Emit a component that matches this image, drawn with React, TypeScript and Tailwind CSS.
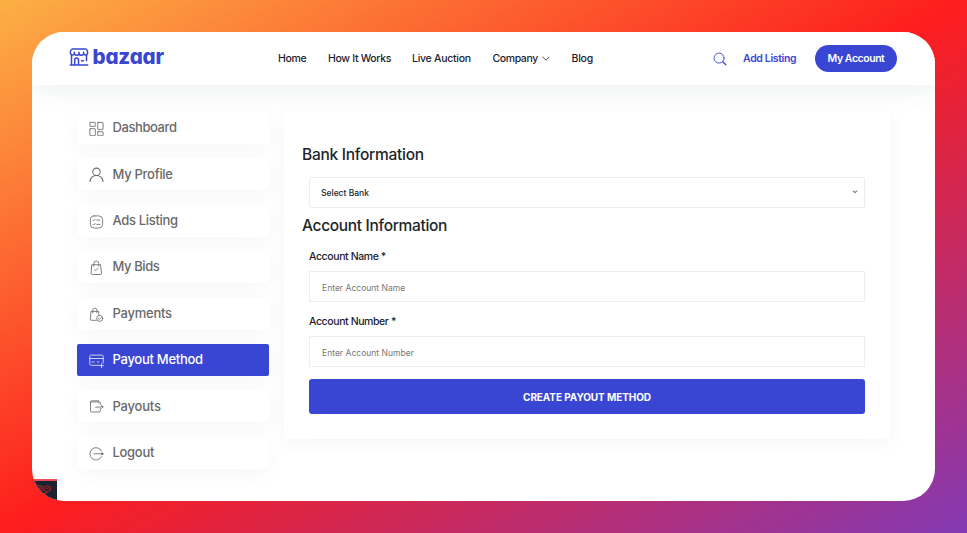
import React from "react";

const thin = {
  viewBox: "0 0 16 16",
  fill: "none",
  stroke: "currentColor",
  strokeWidth: 0.85,
  strokeLinecap: "round" as const,
  strokeLinejoin: "round" as const,
};

const DashboardIcon = () => (
  <svg {...thin} className="h-4 w-4">
    <rect x="0.9" y="2.4" width="5.4" height="4" rx="0.4" />
    <rect x="8.700" y="2.4" width="5.400" height="7" rx="0.4" />
    <rect x="0.9" y="8.700" width="5.400" height="7" rx="0.4" />
    <rect x="8.700" y="11.700" width="5.400" height="4" rx="0.4" />
  </svg>
);

const ProfileIcon = () => (
  <svg {...thin} strokeWidth={1.05} className="h-4 w-4">
    <circle cx="7.500" cy="5.800" r="3.700" />
    <path d="M.9 15.600c.5-3.400 3-6.100 6.600-6.100s6.100 2.700 6.600 6.100" />
  </svg>
);

const ListingIcon = () => (
  <svg {...thin} className="h-4 w-4">
    <rect x="1.400" y="2.900" width="12.200" height="12.200" rx="3.800" />
    <path d="M7.900 7.100h3M7.900 11.400h3M4 7.100l.7.700 1.500-1.600M4 11.400l.7.700 1.500-1.600" />
  </svg>
);

const BidsIcon = () => (
  <svg {...thin} className="h-4 w-4">
    <path d="M3.100 5.700h8.400l1 8.400c.1.900-.4 1.400-1.200 1.400h-8c-.8 0-1.300-.5-1.200-1.400z" />
    <path d="M4.800 7.200V4.500a2.500 2.500 0 0 1 5 0v2.700M5.600 10.500l1.200 1.100 2.300-2.300" />
  </svg>
);

const PaymentsIcon = () => (
  <svg {...thin} className="h-4 w-4">
    <path d="M7.300 14.300H2.300c-.7 0-1.100-.4-1-1.100l.7-7.800h7.600l.4 3.600" />
    <path d="M3.700 6.800V4.300a2.100 2.100 0 0 1 4.200 0v2.500" />
    <circle cx="10.700" cy="12.400" r="3" />
    <path d="M9.400 12.500l.9.900 1.800-1.900" />
  </svg>
);

const MethodIcon = () => (
  <svg {...thin} strokeWidth={0.75} className="h-4 w-4">
    <path d="M10 13.300H2.300c-.9 0-1.500-.5-1.500-1.400V4.500c0-.9.600-1.400 1.500-1.400h10.400c.9 0 1.500.5 1.500 1.400V11" />
    <path d="M.8 6.500h13.400M3 10h2M8.300 10h1.500M12.500 11.600v4M10.500 13.600h4" />
  </svg>
);

const PayoutsIcon = () => (
  <svg {...thin} className="h-4 w-4">
    <path d="M11.300 6.600V4.900c0-.6-.4-.9-1-.9H2.500a.6.600 0 0 1 0-1.200h7.300V4" />
    <path d="M1.500 3.500v9.400c0 .7.400 1.100 1.100 1.100h7.700c.6 0 1-.4 1-1v-2.300M6.700 9.200l7.300-.4M12.400 7.400l1.700 1.400-1.500 1.500" />
  </svg>
);

const LogoutIcon = () => (
  <svg {...thin} className="h-4 w-4">
    <path d="M12.600 5.900A6.200 6.200 0 1 0 12.600 11.700M4.800 8.800h9.400" />
    <path d="M13 7.900l1.200.9-1.200.9z" fill="currentColor" />
  </svg>
);

const items = [
  { label: "Dashboard", icon: DashboardIcon, tracking: "tracking-[-0.420px]" },
  { label: "My Profile", icon: ProfileIcon, tracking: "tracking-[-0.280px]" },
  { label: "Ads Listing", icon: ListingIcon, tracking: "tracking-[-0.320px]" },
  { label: "My Bids", icon: BidsIcon, tracking: "tracking-[-0.400px]" },
  { label: "Payments", icon: PaymentsIcon, tracking: "tracking-[-0.240px]" },
  { label: "Payout Method", icon: MethodIcon, active: true, tracking: "tracking-[-0.280px]" },
  { label: "Payouts", icon: PayoutsIcon, tracking: "tracking-[-0.200px]" },
  { label: "Logout", icon: LogoutIcon, tracking: "tracking-[-0.300px]" },
];

function Logo() {
  return (
    <a className="flex w-[208px] items-start text-[#3946d3]">
      <svg viewBox="0 0 20 18" className="mt-4 h-[18px] w-5" fill="none" stroke="currentColor" strokeWidth="1.500" strokeLinecap="round" strokeLinejoin="round">
        <path d="M3.300.9h13.400c1.300.6 2 2 2 3.700 0 1.200-.6 2.100-1.800 2.400-1 .2-1.700-.3-2.300-1.200-.5.900-1.300 1.500-2.300 1.500S10.500 6.700 10 5.800c-.5.900-1.300 1.500-2.300 1.500S5.900 6.700 5.400 5.800C4.800 6.700 4.100 7.200 3.100 7 1.900 6.700 1.300 5.800 1.300 4.600c0-1.700.7-3.100 2-3.700z" />
        <path d="M5.400 4.200v1M10 4.200v1M14.600 4.200v1M2.500 7.500v9.300M17.500 7.500v5.300M1.300 17h17.400M5.700 16.500v-4.600c0-1.200.7-1.900 1.900-1.900s1.900.7 1.900 1.900v4.600M12.500 12.800h2" />
      </svg>
      <span className="ml-[3.500px] mt-[11px] text-[20.500px] leading-7 font-extrabold tracking-[-0.150px] [font-feature-settings:'cv11']">bazaar</span>
    </a>
  );
}

function Header() {
  return (
    <header className="relative z-10 flex h-[53px] shrink-0 bg-white pl-[37px] text-[10.500px] font-medium text-[#1d1d2f] shadow-[0_6px_26px_rgba(20,70,80,0.070)]">
      <Logo />
      <nav className="flex h-[53px] w-[436px] items-center gap-[21.500px] pl-[1px]">
        <a className="w-[28.500px] whitespace-nowrap tracking-[-0.350px]">Home</a>
        <a className="w-[62.500px] whitespace-nowrap tracking-[-0.320px]">How It Works</a>
        <a className="w-[59px] whitespace-nowrap tracking-[-0.270px]">Live Auction</a>
        <a className="flex w-[57.500px] items-center gap-[4px] whitespace-nowrap tracking-[-0.400px]">
          Company
          <svg viewBox="0 0 8 5" className="h-[5px] w-2 shrink-0" fill="none" stroke="currentColor" strokeWidth="0.800"><path d="M.5.7 4 4.200 7.500.7" /></svg>
        </a>
        <a className="tracking-[-0.250px]">Blog</a>
      </nav>
      <div className="flex h-[53px] items-center text-[#3946d3]">
        <svg viewBox="0 0 14 14" className="mt-[1px] h-[14px] w-[14px]" fill="none" stroke="currentColor" strokeLinecap="round">
          <circle cx="6.100" cy="6.100" r="5" strokeWidth="0.900" />
          <path d="m9.800 9.800 3 3" strokeWidth="1.300" />
        </svg>
        <a className="ml-[16px] w-[72px] font-semibold whitespace-nowrap tracking-[-0.350px]">Add Listing</a>
        <a className="flex h-[27px] w-[82px] items-center justify-center rounded-full bg-[#3946d3] font-semibold whitespace-nowrap tracking-[-0.450px] text-white">My Account</a>
      </div>
    </header>
  );
}

function Sidebar() {
  return (
    <aside className="flex w-48 shrink-0 flex-col gap-[14.400px]">
      {items.map(({ label, icon: Icon, active, tracking }) => (
        <a
          key={label}
          className={
            "flex h-8 items-center rounded-[2px] pl-3 text-[13px] font-medium shadow-[0_4px_20px_rgba(0,0,0,0.040)] " +
            (active ? "bg-[#3946d3] text-white" : "bg-white text-[#6a6a6a]")
          }
        >
          <Icon />
          <span className={"ml-[7.500px] " + tracking}>{label}</span>
        </a>
      ))}
    </aside>
  );
}

function Field({ label, placeholder }: { label: string; placeholder: string }) {
  return (
    <label className="flex flex-col">
      <span className="h-[23px] pt-[1px] text-[10.500px] leading-4 font-medium tracking-[-0.400px] text-[#1d1d2f]">{label}</span>
      <input
        className="h-[31px] border border-[#eeeeee] bg-white px-3 pt-[2px] text-[8.500px] tracking-[0.020px] outline-none placeholder:text-[#777777]"
        placeholder={placeholder}
      />
    </label>
  );
}

function PayoutForm() {
  return (
    <main className="h-[327px] w-[606px] rounded-[3px] bg-white pr-[25px] pl-[18px] shadow-[0_4px_20px_rgba(0,0,0,0.045)]">
      <h2 className="pt-[31px] text-[15.500px] leading-6 font-medium tracking-[-0.270px] text-[#212529]">Bank Information</h2>
      <div className="mt-[10px] ml-[7px] flex h-[31px] items-center justify-between rounded-[2px] border border-[#ececec] pr-[6px] pl-[11px] text-[8.500px] font-medium text-[#212529]">
        <span className="pt-[2px]">Select Bank</span>
        <svg viewBox="0 0 6 4" className="mb-[1px] h-1 w-[6px]" fill="none" stroke="#888" strokeWidth="1.300"><path d="M1 .7 3 2.700 5 .7" /></svg>
      </div>
      <h2 className="mt-[6px] text-[15.500px] leading-6 font-medium tracking-[-0.320px] text-[#212529]">Account Information</h2>
      <form className="mt-[10px] ml-[7px] flex flex-col">
        <Field label="Account Name *" placeholder="Enter Account Name" />
        <div className="h-[11px]" />
        <Field label="Account Number *" placeholder="Enter Account Number" />
        <button type="button" className="mt-[12px] h-[35px] rounded-[3px] bg-[#3946d3] pt-[1px] text-[10px] font-bold tracking-[-0.080px] text-white">
          CREATE PAYOUT METHOD
        </button>
      </form>
    </main>
  );
}

function DebugBar() {
  return (
    <div className="absolute bottom-0 left-0 flex h-[22px] w-[25px] border-t-2 border-[#ed4b5c] bg-[#1b2230] text-[#c42a30]">
      <svg viewBox="0 0 25 20" className="h-5 w-[25px]" fill="none" stroke="currentColor" strokeWidth="0.800">
        <path d="M4 7.500V5l2-.8 2 .8v6l3 2.200 4-2.200M8 5.500l2-1v5.500M12 6l3.200-1.300L18.500 6v3.200L15 11l-3-1.800zM13.500 7.200h3.500M10 14.500l5.500-3M11 12.800l5 2.700" />
      </svg>
    </div>
  );
}

export default function App() {
  return (
    <div className="h-[533px] w-[967px] bg-[linear-gradient(to_bottom_right,#fcb045,#fd1d1d,#833ab4)] p-8 font-['Inter',sans-serif]">
      <div className="relative flex h-[469px] w-[903px] flex-col overflow-hidden rounded-[32px] bg-white">
        <Header />
        <div className="flex items-start gap-[15px] pt-[27px] pl-[45px]">
          <Sidebar />
          <PayoutForm />
        </div>
        <DebugBar />
      </div>
    </div>
  );
}
